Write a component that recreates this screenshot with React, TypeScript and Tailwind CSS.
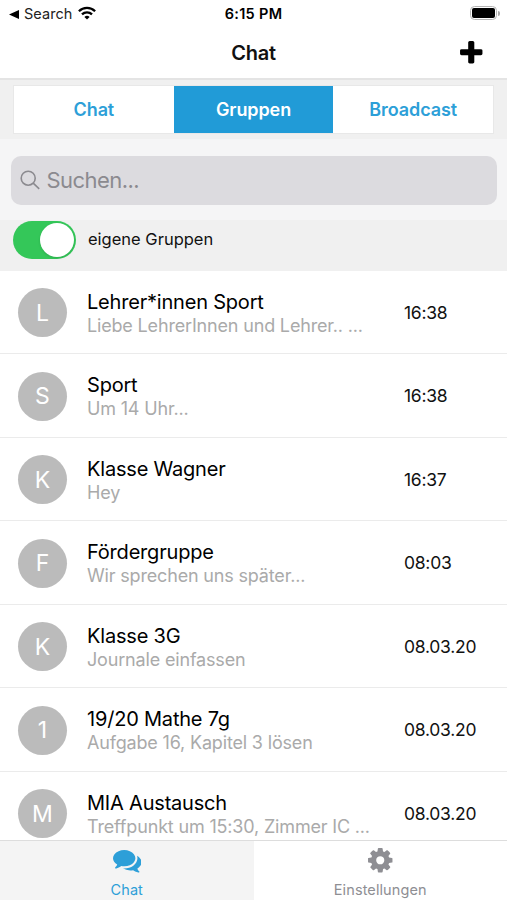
import { useState } from 'react'
import clsx from 'clsx'

interface Group {
  initial: string
  name: string
  message: string
  time: string
}

const groups: Group[] = [
  { initial: 'L', name: 'Lehrer*innen Sport', message: 'Liebe LehrerInnen und Lehrer.. ...', time: '16:38' },
  { initial: 'S', name: 'Sport', message: 'Um 14 Uhr...', time: '16:38' },
  { initial: 'K', name: 'Klasse Wagner', message: 'Hey', time: '16:37' },
  { initial: 'F', name: 'Fördergruppe', message: 'Wir sprechen uns später...', time: '08:03' },
  { initial: 'K', name: 'Klasse 3G', message: 'Journale einfassen', time: '08.03.20' },
  { initial: '1', name: '19/20 Mathe 7g', message: 'Aufgabe 16, Kapitel 3 lösen', time: '08.03.20' },
  { initial: 'M', name: 'MIA Austausch', message: 'Treffpunkt um 15:30, Zimmer IC ...', time: '08.03.20' },
]

const tabs = ['Chat', 'Gruppen', 'Broadcast']

const PLUS =
  'M1600 736v192q0 40-28 68t-68 28h-416v416q0 40-28 68t-68 28h-192q-40 0-68-28t-28-68v-416h-416q-40 0-68-28t-28-68v-192q0-40 28-68t68-28h416v-416q0-40 28-68t68-28h192q40 0 68 28t28 68v416h416q40 0 68 28t28 68z'
const COMMENTS =
  'M1408 768q0 139-94 257t-256.5 186.5-353.5 68.5q-86 0-176-16-124 88-278 128-36 9-86 16h-3q-11 0-20.5-8t-11.5-21q-1-3-1-6.5t.5-6.5 2-6l2.5-5 3.5-5.5 4-5 4.5-5 4-4.5q5-6 23-25t26-29.5 22.5-29 25-38.5 20.5-44q-124-72-195-177t-71-224q0-139 94-257t256.5-186.5 353.5-68.5 353.5 68.5 256.5 186.5 94 257zm384 256q0 120-71 224.5t-195 176.5q10 24 20.5 44t25 38.5 22.5 29 26 29.5 23 25q1 1 4 4.5t4.5 5 4 5 3.5 5.5l2.5 5 2 6 .5 6.5-1 6.5q-3 14-13 22t-22 7q-50-7-86-16-154-40-278-128-90 16-176 16-271 0-472-132 58 4 88 4 161 0 309-45t264-129q125-92 192-212t67-254q0-77-23-152 129 71 204 178t75 230z'
const COG =
  'M1152 896q0-106-75-181t-181-75-181 75-75 181 75 181 181 75 181-75 75-181zm512-109v222q0 12-8 23t-20 13l-185 28q-19 54-39 91 35 50 107 138 10 12 10 25t-9 23q-27 37-99 108t-94 71q-12 0-26-9l-138-108q-44 23-91 38-16 136-29 186-7 28-36 28h-222q-14 0-24.5-8.5t-11.5-21.5l-28-184q-49-16-90-37l-141 107q-10 9-25 9-14 0-25-11-126-114-165-168-7-10-7-23 0-12 8-23 15-21 51-66.5t54-70.5q-27-50-41-99l-183-27q-13-2-21-12.5t-8-23.5v-222q0-12 8-23t19-13l186-28q14-46 39-92-40-57-107-138-10-12-10-24 0-10 9-23 26-36 98.5-107.5t94.5-71.5q13 0 26 10l138 107q44-23 91-38 16-136 29-186 7-28 36-28h222q14 0 24.5 8.5t11.5 21.5l28 184q49 16 90 37l142-107q9-9 24-9 13 0 25 10 129 119 165 170 7 8 7 22 0 12-8 23-15 21-51 66.5t-54 70.5q26 50 41 98l183 28q13 2 21 12.5t8 23.5z'

function Icon({ path, className }: { path: string; className?: string }) {
  return (
    <svg viewBox="0 0 1792 1792" fill="currentColor" className={clsx('h-[28.5px] w-[28.5px]', className)}>
      <path d={path} />
    </svg>
  )
}

function StatusBar() {
  return (
    <div className="grid h-7 grid-cols-[1fr_auto_1fr] items-center px-[7px] text-[14px]">
      <div className="flex items-center pl-[2px]">
        <svg viewBox="0 0 10 9" className="h-[9px] w-[10px]">
          <path d="M10 0v9L0 4.5z" />
        </svg>
        <span className="ml-[5px] text-[14.5px] tracking-[0.05px] text-[#222]">Search</span>
        <svg viewBox="0 0 18 14" className="mb-[2px] ml-[6px] h-[14px] w-[18px]" fill="none" stroke="black" strokeWidth="2.3">
          <path d="M.9 5.2a11.6 11.6 0 0 1 16.2 0" />
          <path d="M4 8.4a7.2 7.2 0 0 1 10 0" />
          <path d="M9 13.6 6.4 11a3.8 3.8 0 0 1 5.2 0z" fill="black" stroke="none" />
        </svg>
      </div>
      <div className="text-center text-[14.5px] font-semibold tracking-[0.3px]">6:15 PM</div>
      <div className="flex items-center justify-end pb-[2px]">
        <div className="h-[14px] w-[27px] rounded-[4.5px] border-[1.5px] border-[#b5b5b5] p-px">
          <div className="h-full rounded-[2px] bg-black" />
        </div>
        <div className="ml-px h-[5px] w-[2px] rounded-r-full bg-[#aaa]" />
      </div>
    </div>
  )
}

export default function App() {
  const [activeTab, setActiveTab] = useState('Gruppen')
  const [ownOnly, setOwnOnly] = useState(true)

  return (
    <div className="flex h-[900px] w-[507px] flex-col overflow-hidden bg-white font-[Inter,'Liberation_Sans',sans-serif] text-black">
      <StatusBar />

      {/* Header */}
      <header className="grid h-[52px] grid-cols-3 items-center border-b-2 border-[#e4e4e4] px-[22px]">
        <h1 className="col-start-2 pb-px text-center text-[20px] font-semibold tracking-[-0.2px] text-[#111]">Chat</h1>
        <button className="justify-self-end">
          <Icon path={PLUS} className="-mr-[0.5px]" />
        </button>
      </header>

      {/* Segmented control */}
      <div className="h-[59px] bg-[#f0f0f0] px-[13px] pt-[5px]">
        <div className="flex h-[49px] border border-[#e8e8e8] bg-white">
          {tabs.map((tab) => (
            <button
              key={tab}
              onClick={() => setActiveTab(tab)}
              className={clsx(
                'flex-1 text-[18px] font-semibold tracking-[-0.1px]',
                tab === activeTab ? 'bg-[#219bd7] text-white' : 'text-[#2d9fd8]'
              )}
            >
              {tab}
            </button>
          ))}
        </div>
      </div>

      {/* Search */}
      <div className="h-[81px] bg-[#f5f5f6] px-[10.5px] pt-[17px]">
        <div className="flex h-[49px] items-center rounded-[10px] bg-[#dcdbdf] pl-[9px] text-[#8b8a8f]">
          <svg viewBox="0 0 20 20" className="mb-[2px] h-5 w-5" fill="none" stroke="currentColor" strokeWidth="1.6">
            <circle cx="8.2" cy="8.2" r="7" />
            <path d="m13.2 13.2 6 5.6" />
          </svg>
          <span className="ml-[7px] text-[22px] tracking-[-0.55px]">Suchen...</span>
        </div>
      </div>

      {/* Own groups switch */}
      <div className="flex h-[50.5px] items-start bg-[#f0f0f0] pl-[13px] pt-px">
        <button
          onClick={() => setOwnOnly(!ownOnly)}
          className={clsx(
            'flex h-[38px] w-[63px] rounded-full p-[2px]',
            ownOnly ? 'justify-end bg-[#34c759]' : 'justify-start bg-[#d5d5d8]'
          )}
        >
          <span className="h-[34px] w-[34px] rounded-full bg-white shadow" />
        </button>
        <span className="ml-3 mt-[6px] text-[16.5px] leading-6 text-[#111]">eigene Gruppen</span>
      </div>

      {/* Group list */}
      <ul className="min-h-0 flex-1 overflow-hidden">
        {groups.map((group) => (
          <li key={group.name} className="flex h-[83.5px] items-center border-b-[1.5px] border-[#ebebeb] pl-[18px] pt-[2px]">
            <div className="flex h-[49px] w-[49px] items-center justify-center rounded-full bg-[#bbb] text-[23px] text-white">
              {group.initial}
            </div>
            <div className="ml-5 w-[317px] whitespace-nowrap pt-px">
              <p className="text-[20px] leading-6 tracking-[-0.2px]">{group.name}</p>
              <p className="text-[18px] leading-[23px] tracking-[-0.17px] text-[#aaa]">{group.message}</p>
            </div>
            <span className="text-[17.5px] tracking-[-0.25px] text-[#111]">{group.time}</span>
          </li>
        ))}
      </ul>

      {/* Bottom navigation */}
      <nav className="grid h-[60px] grid-cols-2 border-t border-[#ddd] text-[14.5px] tracking-[0.1px]">
        <button className="flex flex-col items-center bg-[#f4f4f4] pt-[5px] text-[#2d9fd8]">
          <Icon path={COMMENTS} />
          <span className="mt-1">Chat</span>
        </button>
        <button className="flex flex-col items-center pt-[5px] text-[#8e8e93]">
          <Icon path={COG} />
          <span className="mt-1">Einstellungen</span>
        </button>
      </nav>
    </div>
  )
}
